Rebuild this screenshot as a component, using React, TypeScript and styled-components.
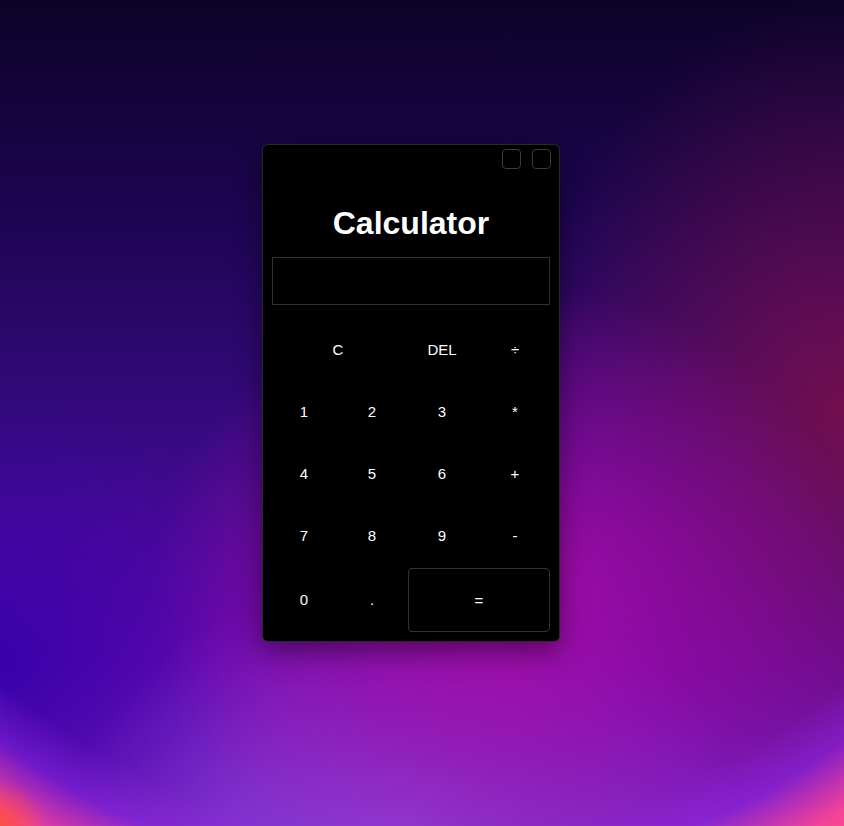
import React, { useState } from 'react';
import styled, { createGlobalStyle } from 'styled-components';

const GlobalStyle = createGlobalStyle`
  html, body {
    margin: 0;
    padding: 0;
  }
  body {
    min-height: 100vh;
    font-family: "Liberation Sans", Arial, sans-serif;
    background:
      radial-gradient(circle 45px at 0 100%, rgba(255, 80, 50, 0.85), transparent 100%),
      radial-gradient(circle 780px at 50% 180px, transparent 84%, rgba(150, 40, 230, 0.45) 90%, rgba(255, 70, 150, 0.9) 97%, #ff4a8a 100%),
      radial-gradient(ellipse 42% 38% at 60% 72%, rgba(172, 12, 168, 0.95) 0%, rgba(160, 10, 165, 0.55) 50%, transparent 100%),
      radial-gradient(ellipse 40% 30% at 48% 100%, rgba(140, 70, 220, 0.9), transparent 100%),
      radial-gradient(ellipse 38% 50% at 100% 50%, rgba(125, 15, 70, 0.85), transparent 100%),
      radial-gradient(ellipse 35% 32% at 0% 80%, rgba(50, 0, 170, 0.9), transparent 100%),
      linear-gradient(180deg, #0c0328 0%, #1c0550 25%, #3a0a85 55%, #6a0ab0 80%, #7a20c0 100%);
    background-attachment: fixed;
  }
`;

const Stage = styled.div`
  display: flex;
  justify-content: center;
  align-items: flex-start;
  min-height: 100vh;
  padding: 144px 22px 0 0;
  box-sizing: border-box;
`;

const Card = styled.div`
  width: 298px;
  box-sizing: border-box;
  display: flex;
  flex-direction: column;
  padding: 0 9px 9px;
  background: #000;
  border: 1px solid rgba(255, 255, 255, 0.16);
  border-radius: 6px;
  box-shadow: 0 10px 28px rgba(0, 0, 0, 0.45);
`;

const TitleBar = styled.div`
  display: flex;
  justify-content: flex-end;
  gap: 11px;
  height: 24px;
  padding-top: 4px;
  margin-right: -1px;
  box-sizing: border-box;
`;

const WindowButton = styled.button`
  width: 19px;
  height: 20px;
  padding: 0;
  background: transparent;
  border: 1px solid #3a3a3a;
  border-radius: 4px;
  cursor: pointer;
`;

const Title = styled.h1`
  margin: 36px 0 0;
  font-size: 32px;
  line-height: 37px;
  font-weight: 700;
  color: #fff;
  text-align: center;
`;

const Display = styled.div`
  margin-top: 15px;
  height: 48px;
  box-sizing: border-box;
  border: 1px solid #333;
  color: #fff;
  font-size: 24px;
  display: flex;
  align-items: center;
  justify-content: flex-end;
  padding: 0 10px;
`;

const Keypad = styled.div`
  margin-top: 13px;
  display: grid;
  grid-template-columns: 64px 72px 68px 74px;
  grid-template-rows: repeat(4, 62px) 66px;
`;

const Key = styled.button<{ $span?: number; $outlined?: boolean; $shift?: number }>`
  grid-column: span ${(p) => p.$span ?? 1};
  align-self: ${(p) => (p.$outlined ? 'end' : 'stretch')};
  height: ${(p) => (p.$outlined ? '64px' : 'auto')};
  padding: 0;
  padding-left: ${(p) => Math.max(p.$shift ?? 0, 0)}px;
  padding-right: ${(p) => Math.max(-(p.$shift ?? 0), 0)}px;
  background: transparent;
  color: #fff;
  font-family: "Liberation Sans", Arial, sans-serif;
  font-size: 15px;
  border: ${(p) => (p.$outlined ? '1px solid #333' : 'none')};
  border-radius: 4px;
  cursor: pointer;
`;

const keys: { label: string; span?: number; outlined?: boolean; shift?: number }[] = [
  { label: 'C', span: 2, shift: -4 },
  { label: 'DEL' },
  { label: '÷', shift: 4 },
  { label: '1' },
  { label: '2' },
  { label: '3' },
  { label: '*', shift: 4 },
  { label: '4' },
  { label: '5' },
  { label: '6' },
  { label: '+', shift: 4 },
  { label: '7' },
  { label: '8' },
  { label: '9' },
  { label: '-', shift: 4 },
  { label: '0' },
  { label: '.' },
  { label: '=', span: 2, outlined: true },
];

export default function App() {
  const [value, setValue] = useState('');

  const press = (label: string) => {
    if (label === 'C') return setValue('');
    if (label === 'DEL') return setValue((v) => v.slice(0, -1));
    if (label === '=') {
      try {
        const expr = value.replace(/÷/g, '/');
        // eslint-disable-next-line no-new-func
        const result = Function(`return (${expr})`)();
        setValue(String(result));
      } catch {
        setValue('');
      }
      return;
    }
    setValue((v) => v + label);
  };

  return (
    <>
      <GlobalStyle />
      <Stage>
        <Card>
          <TitleBar>
            <WindowButton aria-label="minimize" />
            <WindowButton aria-label="close" />
          </TitleBar>
          <Title>Calculator</Title>
          <Display>{value}</Display>
          <Keypad>
            {keys.map((k) => (
              <Key
                key={k.label}
                $span={k.span}
                $outlined={k.outlined}
                $shift={k.shift}
                onClick={() => press(k.label)}
              >
                {k.label}
              </Key>
            ))}
          </Keypad>
        </Card>
      </Stage>
    </>
  );
}
